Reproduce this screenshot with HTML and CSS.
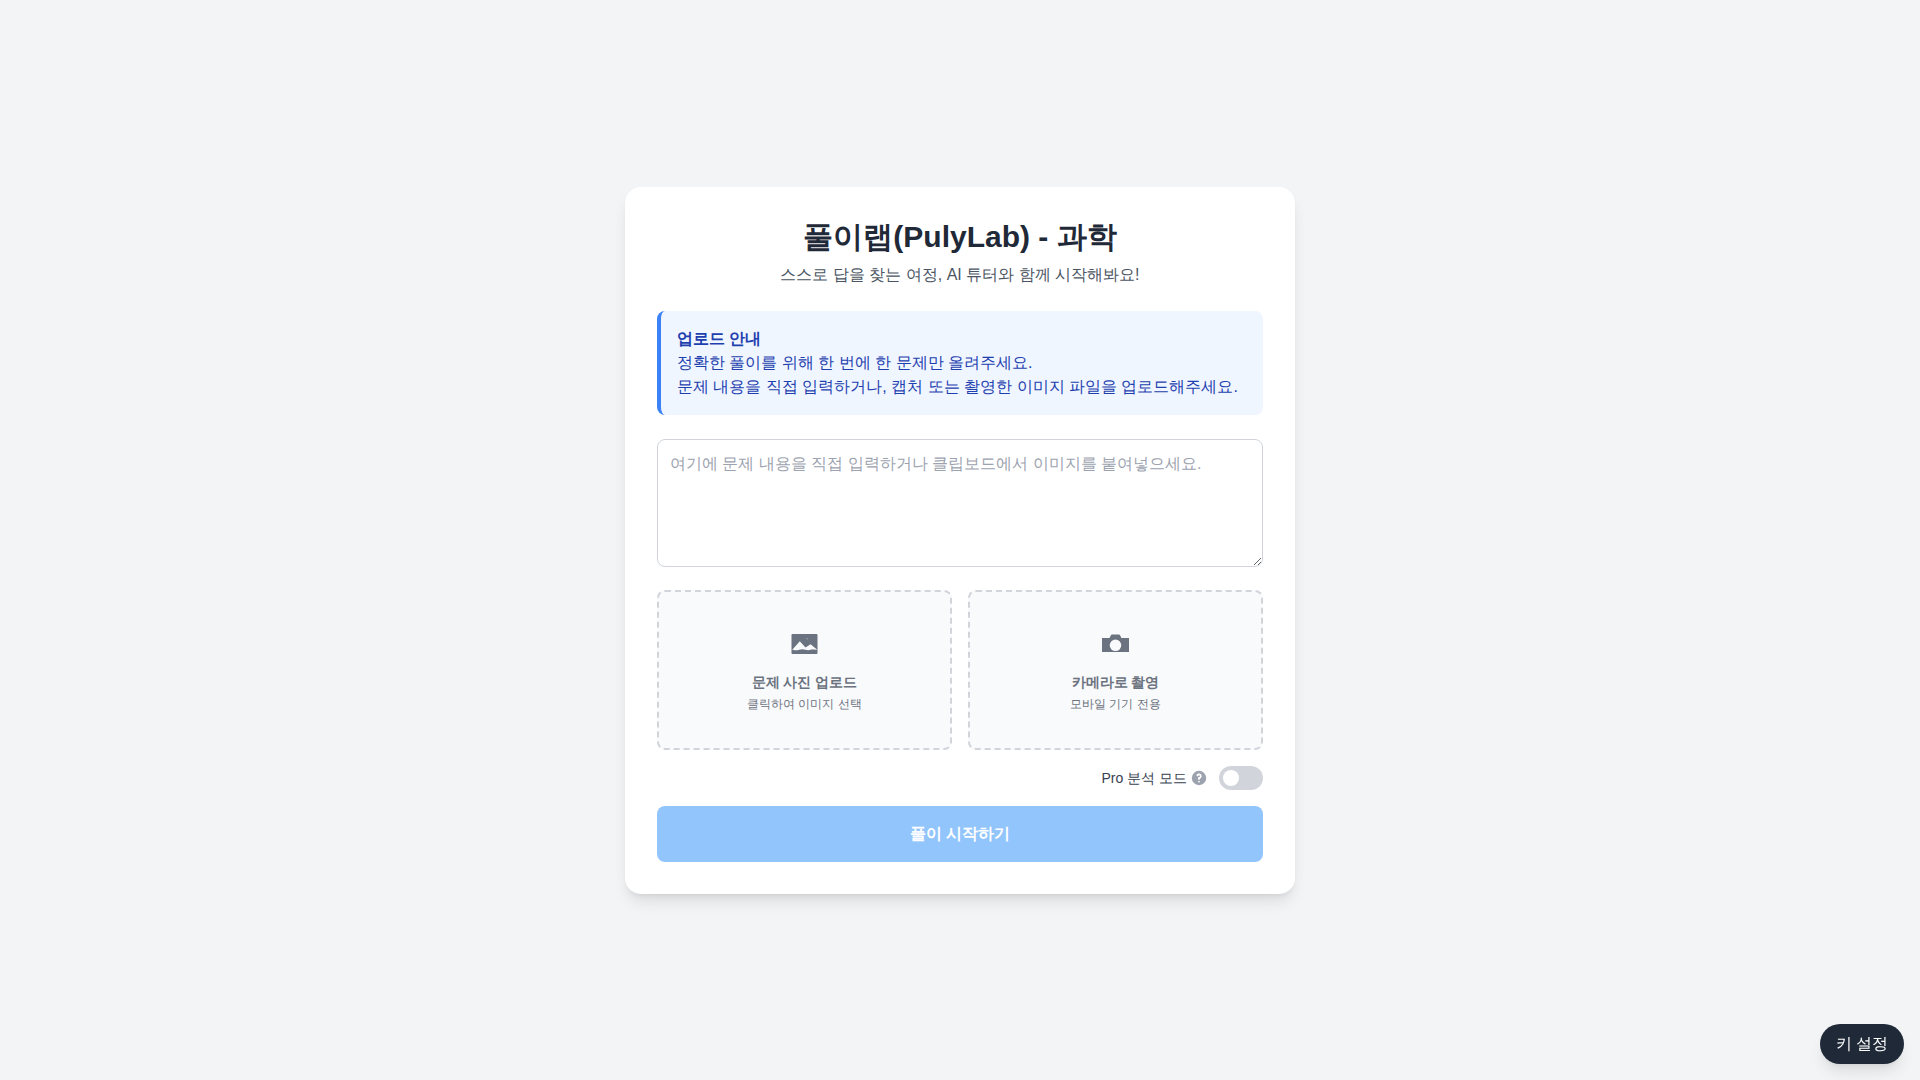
FILE: index.html
```html
<!DOCTYPE html>
<html lang="ko">
<head>
<meta charset="utf-8">
<title>풀이랩(PulyLab) - 과학</title>
<link rel="stylesheet" href="styles.css">
</head>
<body>
<main class="card">
  <header class="header">
    <h1 class="title">풀이랩(PulyLab) - 과학</h1>
    <p class="subtitle">스스로 답을 찾는 여정, AI 튜터와 함께 시작해봐요!</p>
  </header>
  <section class="notice">
    <p class="notice-title">업로드 안내</p>
    <p>정확한 풀이를 위해 한 번에 한 문제만 올려주세요.</p>
    <p>문제 내용을 직접 입력하거나, 캡처 또는 촬영한 이미지 파일을 업로드해주세요.</p>
  </section>
  <textarea class="problem" placeholder="여기에 문제 내용을 직접 입력하거나 클립보드에서 이미지를 붙여넣으세요."></textarea>
  <div class="uploads">
    <div class="upload">
      <svg class="upload-icon" viewBox="0.5 0 26 32" aria-hidden="true">
        <path fill-rule="evenodd" d="M1 6h24a1 1 0 0 1 1 1v18a1 1 0 0 1-1 1H1a1 1 0 0 1-1-1V7a1 1 0 0 1 1-1zM0.6 22l7.7-8.7 5.7 6.1 5.1-3.2 6.3 5.2-.2.4c-2.6-.4-3.800-.6-5.300-.2-2 .6-3.700.9-5.900.2-2.300-.8-3.800-.8-6.300 0-2.200.7-3.800.7-6.100 0z"/>
        <circle cx="15.700" cy="10.700" r=".8" fill="#9ca3af"/>
      </svg>
      <span class="upload-title">문제 사진 업로드</span>
      <span class="upload-sub">클릭하여 이미지 선택</span>
    </div>
    <div class="upload">
      <svg class="upload-icon" viewBox="0.5 0 28 32" aria-hidden="true">
        <path fill-rule="evenodd" d="M0.500 10h7.500l1.300-2.600c.3-.6.700-.8 1.300-.8h6.800c.6 0 1 .2 1.300.8L19.900 10h7.600v14H0.500zM14 11.500a5.800 5.800 0 1 0 0 11.600 5.800 5.800 0 0 0 0-11.600z"/>
      </svg>
      <span class="upload-title">카메라로 촬영</span>
      <span class="upload-sub">모바일 기기 전용</span>
    </div>
  </div>
  <div class="pro-row">
    <span class="pro-label">Pro 분석 모드</span>
    <svg class="help" viewBox="0 0 20 20" aria-hidden="true">
      <path fill-rule="evenodd" d="M18 10a8 8 0 1 1-16 0 8 8 0 0 1 16 0zm-8-3a1 1 0 0 0-.867.5 1 1 0 1 1-1.731-1A3 3 0 0 1 13 8a3.001 3.001 0 0 1-2 2.830V11a1 1 0 1 1-2 0v-1a1 1 0 0 1 1-1 1 1 0 1 0 0-2zm0 8a1 1 0 1 0 0-2 1 1 0 0 0 0 2z"/>
    </svg>
    <span class="toggle"><span class="knob"></span></span>
  </div>
  <button class="start" type="button">풀이 시작하기</button>
</main>
<button class="keys" type="button">키 설정</button>
</body>
</html>
```
FILE: styles.css
```css
* { box-sizing: border-box; }
html, body { height: 100%; }
body {
  margin: 0;
  background: #f3f4f6;
  font-family: "Liberation Sans", sans-serif;
  color: #1f2937;
  display: flex;
  align-items: center;
  justify-content: center;
  line-height: 1.5;
}
.card {
  width: 670px;
  background: #fff;
  border-radius: 16px;
  padding: 32px;
  box-shadow: 0 10px 15px -3px rgba(0,0,0,.1), 0 4px 6px -4px rgba(0,0,0,.1);
}
.header { text-align: center; margin-bottom: 24px; }
.title { margin: 0; font-size: 30px; line-height: 36px; font-weight: 700; color: #1f2937; }
.subtitle { margin: 8px 0 0; font-size: 16px; line-height: 24px; color: #4b5563; }
.notice {
  background: #eff6ff;
  border-left: 4px solid #3b82f6;
  border-radius: 8px;
  padding: 16px;
  margin-bottom: 24px;
  color: #1e40af;
  font-size: 16px;
  line-height: 24px;
}
.notice p { margin: 0; }
.notice .notice-title { font-weight: 700; }
.problem {
  display: block;
  width: 100%;
  height: 128px;
  border: 1px solid #d1d5db;
  border-radius: 8px;
  padding: 12px;
  margin-bottom: 23.75px;
  font: 16px/24px "Liberation Sans", sans-serif;
  color: #1f2937;
  background: #fff;
  outline: none;
}
.problem::placeholder { color: #9ca3af; opacity: 1; }
.uploads { display: grid; grid-template-columns: 1fr 1fr; gap: 16px; }
.upload {
  height: 159.25px;
  border: 2px dashed #d1d5db;
  border-radius: 8px;
  background: #f9fafb;
  display: flex;
  flex-direction: column;
  align-items: center;
  justify-content: center;
}
.upload-icon { height: 32px; margin-bottom: 12px; fill: #6b7280; display: block; overflow: visible; }
.upload-title { font-size: 14px; line-height: 20px; font-weight: 600; color: #6b7280; }
.upload-sub { margin-top: 4px; font-size: 12px; line-height: 16px; color: #6b7280; }
.pro-row {
  display: flex;
  align-items: center;
  justify-content: flex-end;
  margin-top: 16px;
}
.pro-label { font-size: 14px; line-height: 20px; color: #374151; }
.help { width: 18px; height: 18px; margin-left: 3px; margin-right: 11px; fill: #9ca3af; }
.toggle {
  display: block;
  width: 44px;
  height: 24px;
  border-radius: 12px;
  background: #d1d5db;
  padding: 4px;
}
.knob { display: block; width: 16px; height: 16px; border-radius: 50%; background: #fff; }
.start {
  display: block;
  width: 100%;
  height: 56px;
  margin-top: 16px;
  border: 0;
  border-radius: 8px;
  background: #93c5fd;
  color: #fff;
  font: 600 16px/24px "Liberation Sans", sans-serif;
}
.keys {
  position: fixed;
  right: 16px;
  bottom: 16px;
  height: 40px;
  padding: 0 16px;
  border: 0;
  border-radius: 20px;
  background: #1f2937;
  color: #fff;
  font: 16px/24px "Liberation Sans", sans-serif;
  box-shadow: 0 10px 15px -3px rgba(0,0,0,.1), 0 4px 6px -4px rgba(0,0,0,.1);
}
```
